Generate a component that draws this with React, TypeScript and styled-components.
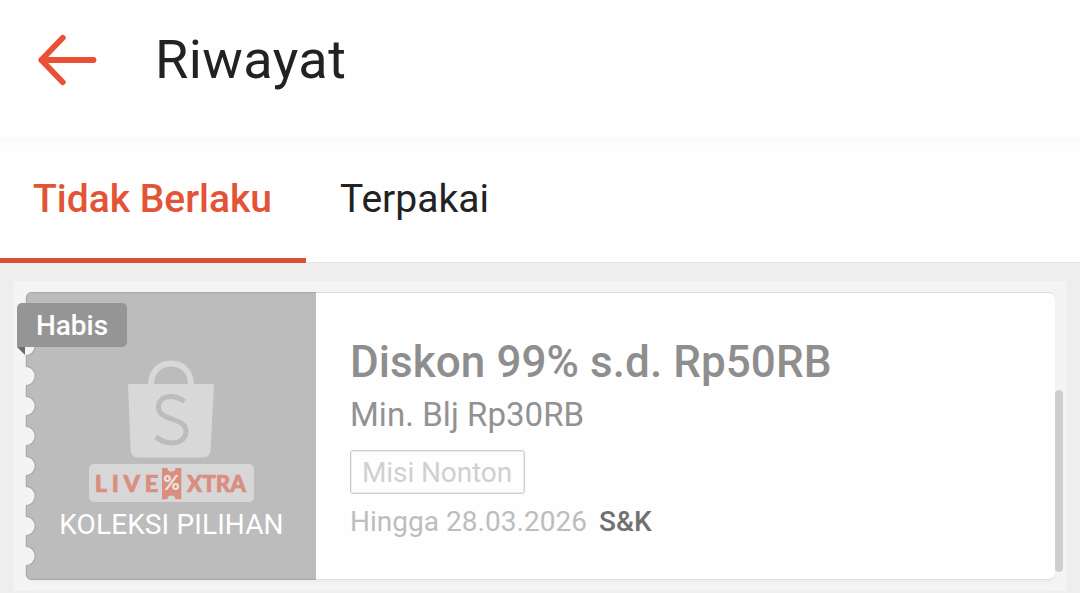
import React from "react";
import styled, { createGlobalStyle } from "styled-components";

const GlobalStyle = createGlobalStyle`
  * { box-sizing: border-box; }
  html, body { margin: 0; padding: 0; overflow: hidden; }
  body { font-family: Roboto, "Liberation Sans", sans-serif; background: #eeeeee; }
`;

const Screen = styled.main`
  width: 1080px;
  height: 593px;
  display: flex;
  flex-direction: column;
  background: #eeeeee;
  overflow: hidden;
`;

const Header = styled.header`
  flex: none;
  height: 137px;
  display: flex;
  align-items: flex-start;
  gap: 57px;
  padding: 28px 0 0 34px;
  background: #fefefe;
`;

const BackButton = styled.button`
  width: 64px;
  height: 64px;
  padding: 0;
  border: 0;
  background: none;
`;

const Title = styled.h1`
  margin: 0;
  font-size: 54px;
  font-weight: 400;
  line-height: 64px;
  letter-spacing: 0.45px;
  color: #222222;
`;

const Tabs = styled.nav`
  flex: none;
  height: 126px;
  display: flex;
  background: linear-gradient(#f9f9f9, #fbfbfb 5px, #fefefe 11px);
  box-shadow: inset 0 -1px 0 #e4e4e4;
`;

const Tab = styled.button<{ $active?: boolean }>`
  height: 126px;
  padding: 2px 34px 0 ${(p) => (p.$active ? "33px" : "34px")};
  border: 0;
  border-bottom: 5px solid ${(p) => (p.$active ? "#de4f33" : "transparent")};
  background: none;
  font-family: inherit;
  font-size: 39px;
  line-height: 46px;
  font-weight: ${(p) => (p.$active ? 500 : 400)};
  color: ${(p) => (p.$active ? "#e35335" : "#222222")};
  white-space: nowrap;
`;

const Panel = styled.section`
  flex: none;
  width: 1052px;
  height: 310px;
  margin: 18px 0 0 14px;
  padding: 11px 11px 0 12px;
  background: #f4f4f4;
  position: relative;
`;

const Voucher = styled.article`
  height: 288px;
  display: flex;
  border-radius: 6px;
  background: #fefefe;
  box-shadow: inset 0 1px 0 #dcdcdc, inset 0 -1px 0 #dedede, 0 3px 3px #eeeeee;
  position: relative;
`;

const Stub = styled.div`
  width: 290px;
  height: 288px;
  display: flex;
  flex-direction: column;
  align-items: center;
  padding-top: 66px;
  position: relative;
  isolation: isolate;
`;

const StubShape = styled.svg`
  position: absolute;
  inset: 0 auto auto -1px;
  z-index: -1;
`;

const LiveBadge = styled.svg`
  margin-top: 4px;
  flex: none;
`;

const StubLabel = styled.div`
  margin-top: 7px;
  padding-left: 1px;
  font-size: 28px;
  line-height: 32px;
  letter-spacing: 0.12px;
  color: #ffffff;
  white-space: nowrap;
`;

const Ribbon = styled.div`
  position: absolute;
  left: -9px;
  top: 11px;
  width: 110px;
  height: 44px;
  border-radius: 5px 5px 5px 0;
  background: #959595;
  color: #ffffff;
  font-size: 28px;
  font-weight: 500;
  line-height: 46px;
  text-align: center;
  &::after {
    content: "";
    position: absolute;
    left: 0;
    top: 44px;
    border-top: 8px solid #6c6c6c;
    border-left: 8px solid transparent;
  }
`;

const Details = styled.div`
  display: flex;
  flex-direction: column;
  align-items: flex-start;
  padding: 44px 0 0 34px;
  white-space: nowrap;
`;

const Discount = styled.h2`
  margin: 0;
  font-size: 44px;
  font-weight: 500;
  line-height: 52px;
  letter-spacing: 0.07px;
  color: #8e8e8e;
`;

const Minimum = styled.p`
  margin: 7px 0 0;
  font-size: 33px;
  line-height: 40px;
  letter-spacing: 0.05px;
  color: #929292;
`;

const Tag = styled.span`
  height: 44px;
  margin-top: 15px;
  padding: 0 12px 0 11px;
  border: 1px solid #cccccc;
  box-shadow: inset 0 0 0 1px #eeeeee;
  border-radius: 3px;
  font-size: 28px;
  line-height: 43px;
  letter-spacing: -0.1px;
  color: #d0d0d0;
`;

const Footer = styled.p`
  display: flex;
  gap: 12px;
  margin: 12px 0 0;
  font-size: 28px;
  line-height: 32px;
  letter-spacing: 0.03px;
  color: #bdbdbd;
`;

const Terms = styled.strong`
  font-weight: 500;
  letter-spacing: 0;
  color: #717171;
`;

const ScrollThumb = styled.div`
  position: absolute;
  right: 3px;
  top: 109px;
  width: 8px;
  height: 182px;
  border-radius: 4px;
  background: #cecece;
`;

const notches = [54, 84, 114, 144, 174, 204, 234, 264];
const stubPath =
  "M291 0 H7 A6 6 0 0 0 1 6 " +
  notches.map((y) => `V${y - 9.3} A9.1 9.3 0 0 1 1 ${y + 9.3}`).join(" ") +
  " V282 A6 6 0 0 0 7 288 H291 Z";
const edgePath =
  "M291 0.6 H7 A5.4 5.4 0 0 0 1.4 6 " +
  notches.map((y) => `V${y - 9.5} A8.8 9.5 0 0 1 1.4 ${y + 9.5}`).join(" ") +
  " V282 A5.4 5.4 0 0 0 7 287.4 H291";

export default function App() {
  return (
    <Screen>
      <GlobalStyle />
      <Header>
        <BackButton aria-label="Kembali">
          <svg width="64" height="64" viewBox="0 0 64 64" fill="none" stroke="#ea5034" strokeWidth="5.8" strokeLinecap="round" strokeLinejoin="round">
            <path d="M59.5 32H7.3M28.8 9.8 7.3 32l21.5 22.2" />
          </svg>
        </BackButton>
        <Title>Riwayat</Title>
      </Header>
      <Tabs>
        <Tab $active>Tidak Berlaku</Tab>
        <Tab>Terpakai</Tab>
      </Tabs>
      <Panel>
        <Voucher>
          <Stub>
            <StubShape width="291" height="288" viewBox="0 0 291 288">
              {notches.map((y) => (
                <circle key={y} cx="1" cy={y} r="9.3" fill="#f4f4f4" />
              ))}
              <path d={stubPath} fill="#bcbcbc" />
              <path d={edgePath} fill="none" stroke="#aaaaaa" strokeWidth="1.2" />
            </StubShape>
            <svg width="90" height="102" viewBox="0 0 90 102">
              <path d="M25 27C25 13 34 5.500 45 5.500S65 13 65 27" fill="none" stroke="#d8d8d8" strokeWidth="6" />
              <path d="M3 26Q2 26 2 27L4.700 92Q5 99.500 12 99.500H77Q84 99.500 84.500 92L88 27Q88 26 87 26Z" fill="#d8d8d8" />
              <path d="M58.500 43.500C53 39.500 48 38.500 44.500 38.500C37 38.500 32.500 43 32.500 49C32.500 64 60 58.500 60 73.500C60 80.500 54 85 46 85C40 85 35 83 29.800 78.700" fill="none" stroke="#bcbcbc" strokeWidth="5" />
            </svg>
            <LiveBadge width="165" height="38" viewBox="0 0 165 38">
              <rect width="165" height="38" rx="5" fill="#d7d7d7" />
              <g fill="#da8e80" stroke="#da8e80" strokeWidth="0.7" fontFamily="Lato, sans-serif" fontWeight="900" fontSize="23.500">
                <text x="5.800" y="28" textLength="63.500" lengthAdjust="spacing">LIVE</text>
                <text x="98" y="28" textLength="59" lengthAdjust="spacingAndGlyphs">XTRA</text>
              </g>
              <path d="M73 4H78.500A4 3.500 0 0 0 86.500 4H92.300V35.300H86.500A4 3.800 0 0 0 78.500 35.300H73Z" fill="#da8e80" />
              <text x="74.300" y="25.800" textLength="16.500" lengthAdjust="spacingAndGlyphs" fontFamily="Lato, sans-serif" fontWeight="900" fontSize="20" fill="#ebe4e2">%</text>
            </LiveBadge>
            <StubLabel>KOLEKSI PILIHAN</StubLabel>
          </Stub>
          <Details>
            <Discount>Diskon 99% s.d. Rp50RB</Discount>
            <Minimum>Min. Blj Rp30RB</Minimum>
            <Tag>Misi Nonton</Tag>
            <Footer>
              <span>Hingga 28.03.2026</span>
              <Terms>S&amp;K</Terms>
            </Footer>
          </Details>
          <Ribbon>Habis</Ribbon>
        </Voucher>
        <ScrollThumb />
      </Panel>
    </Screen>
  );
}
